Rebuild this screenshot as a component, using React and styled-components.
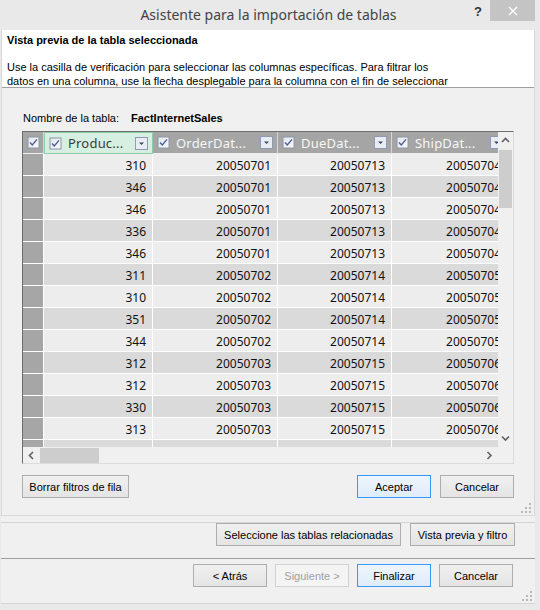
import React from 'react';
import styled, { createGlobalStyle, css } from 'styled-components';

const Global = createGlobalStyle`
  html, body { margin: 0; padding: 0; background: #e9e9e9; }
  body { width: 540px; height: 610px; overflow: hidden; }
  * { box-sizing: border-box; }
`;

const Window = styled.div`
  width: 540px;
  height: 610px;
  background: #e9e9e9;
  display: flex;
  flex-direction: column;
  font-family: "Liberation Sans", Arial, sans-serif;
  font-size: 11px;
  color: #000;
`;

const TitleBar = styled.div`
  height: 30px;
  flex-shrink: 0;
  display: grid;
  grid-template-columns: 1fr auto 1fr;
`;

const Title = styled.div`
  grid-column: 2;
  font-family: "Noto Sans", "Open Sans", sans-serif;
  font-size: 14px;
  color: #444;
  line-height: 30px;
  padding-right: 3px;
`;

const TitleControls = styled.div`
  grid-column: 3;
  display: flex;
  justify-content: flex-end;
  align-items: flex-start;
  padding-right: 5px;
`;

const Help = styled.span`
  font-family: "Liberation Sans", Arial, sans-serif;
  font-weight: bold;
  font-size: 13px;
  color: #333;
  margin-top: 4px;
  margin-right: 8px;
`;

const Close = styled.div`
  width: 45px;
  height: 21px;
  background: #c4c4c4;
  display: flex;
  align-items: center;
  justify-content: center;
`;

const Body = styled.div`
  height: 574px;
  margin: 0 5px 0 1px;
  background: #f0f0f0;
  border-bottom: 1px solid #d5d5d5;
  display: flex;
  flex-direction: column;
  position: relative;
`;

const Inner = styled.div`
  position: relative;
  border: 1px solid #d9d9d9;
  border-top: none;
  display: flex;
  flex-direction: column;
`;

const Banner = styled.div`
  height: 58px;
  background: #fff;
  border-bottom: 1px solid #a0a0a0;
  padding: 4px 0 0 5px;
  overflow: hidden;
`;

const BannerTitle = styled.div`
  font-weight: bold;
  line-height: 13px;
  height: 13px;
`;

const BannerText = styled.div`
  margin-top: 13px;
`;

const Line = styled.div`
  line-height: 14px;
  white-space: nowrap;
`;

const Content = styled.div`
  padding: 23px 20px 17px 20px;
  display: flex;
  flex-direction: column;
`;

const NameRow = styled.div`
  display: flex;
  gap: 12px;
  line-height: 14px;
  padding-left: 1px;
`;

const Bold = styled.span`
  font-weight: bold;
`;

const Grid = styled.div`
  margin-top: 6px;
  height: 333px;
  border: 1px solid;
  border-color: #6e6e6e #dcdcdc #dcdcdc #6e6e6e;
  display: flex;
  flex-direction: column;
  background: #f0f0f0;
`;

const GridMain = styled.div`
  display: flex;
  height: 315px;
`;

const Viewport = styled.div`
  flex: 1;
  overflow: hidden;
`;

const Table = styled.div`
  display: grid;
  grid-template-columns: 21px 109px 125px 114px 116px;
  grid-auto-rows: 22px;
  width: 485px;
  font-family: "Noto Sans", "Open Sans", sans-serif;
`;

const HeadCell = styled.div`
  display: flex;
  align-items: center;
  padding: 0 4px;
  gap: 6px;
  background: #a5a5a5;
  border-right: 1px solid #d6d6d6;
  border-bottom: 1px solid #efefef;
  font-size: 13px;
  color: #f7f7f7;
  overflow: hidden;
  white-space: nowrap;
  ${p => p.$active && css`
    background: #d6efe0;
    border: 1px solid #8ccfa6;
    color: #3a3a3a;
  `}
`;

const HeadLabel = styled.span`
  flex: 1;
  letter-spacing: 0.2px;
`;

const Corner = styled.div`
  background: #a5a5a5;
  border-right: 1px solid #d6d6d6;
  border-bottom: 1px solid #efefef;
  display: flex;
  align-items: center;
  justify-content: center;
`;

const RowHead = styled.div`
  background: #a6a6a6;
  border-right: 1px solid #fff;
  border-bottom: 1px solid #fff;
`;

const Cell = styled.div`
  background: ${p => (p.$alt ? '#dadada' : '#ededed')};
  border-right: 1px solid #fff;
  border-bottom: 1px solid #fff;
  text-align: right;
  padding-right: 6px;
  font-size: 12px;
  line-height: 24px;
  white-space: nowrap;
  overflow: hidden;
  color: #111;
`;

const VScroll = styled.div`
  width: 15px;
  display: flex;
  flex-direction: column;
  background: #f0f0f0;
`;

const ArrowBox = styled.div`
  width: ${p => p.$w || 15}px;
  height: ${p => p.$h || 17}px;
  flex-shrink: 0;
  display: flex;
  align-items: center;
  justify-content: center;
`;

const VThumb = styled.div`
  margin: 1px 1px 0 1px;
  height: 58px;
  background: #cdcdcd;
`;

const Fill = styled.div`
  flex: 1;
`;

const HScroll = styled.div`
  height: 16px;
  display: flex;
  background: #f0f0f0;
`;

const HThumb = styled.div`
  margin-top: 1px;
  width: 59px;
  height: 15px;
  background: #cdcdcd;
`;

const ScrollCorner = styled.div`
  width: 15px;
  background: #f0f0f0;
`;

const ButtonRow = styled.div`
  display: flex;
  gap: ${p => p.$gap || 8}px;
  align-items: center;
  justify-content: ${p => p.$justify || 'flex-end'};
  margin-top: ${p => p.$mt || 0}px;
`;

const Button = styled.button`
  height: 23px;
  width: ${p => p.$w}px;
  padding: 0;
  margin: 0;
  font-family: "Liberation Sans", Arial, sans-serif;
  font-size: 11px;
  color: #000;
  background: linear-gradient(#f0f0f0, #e4e4e4);
  border: 1px solid #adadad;
  border-radius: 0;
  ${p => p.$primary && css`
    border-color: #3399ff;
    background: linear-gradient(#eef5fc, #dfecf9);
  `}
  ${p => p.$disabled && css`
    color: #a0a0a0;
    border-color: #d2d2d2;
    background: #f4f4f4;
  `}
`;

const Spacer = styled.div`
  flex: 1;
`;

const Section = styled.div`
  border-top: 1px solid ${p => p.$dark ? '#a0a0a0' : '#d5d5d5'};
  height: ${p => p.$h}px;
  padding: ${p => p.$pad};
  margin-top: ${p => p.$mt || 0}px;
  display: flex;
  flex-direction: column;
`;

const Grip = styled.svg`
  position: absolute;
  right: 3px;
  bottom: 2px;
`;

const CheckBox = () => (
  <svg width="13" height="13" viewBox="0 0 13 13" style={{ flexShrink: 0 }}>
    <defs>
      <linearGradient id="cbg" x1="0" y1="0" x2="1" y2="1">
        <stop offset="0" stopColor="#e4e7ee" />
        <stop offset="1" stopColor="#f7f8fa" />
      </linearGradient>
    </defs>
    <rect x="0.5" y="0.5" width="12" height="12" fill="#8e96a8" />
    <rect x="1.5" y="1.5" width="10" height="10" fill="url(#cbg)" />
    <path d="M3 6.5 L5.3 9 L10 3.4" fill="none" stroke="#4b5f95" strokeWidth="1.4" />
  </svg>
);

const DropDown = () => (
  <svg width="13" height="13" viewBox="0 0 13 13" style={{ flexShrink: 0 }}>
    <rect x="0.5" y="0.5" width="12" height="12" fill="#e9ecf2" stroke="#8f9bb4" />
    <path d="M4 5.5 H9 L6.5 8 Z" fill="#3d4766" />
  </svg>
);

const Chevron = ({ dir }) => {
  const paths = {
    up: 'M1 5 L4.5 1.5 L8 5',
    down: 'M1 1.5 L4.5 5 L8 1.5',
    left: 'M5 1 L1.5 4.5 L5 8',
    right: 'M1.5 1 L5 4.5 L1.5 8',
  };
  const vertical = dir === 'up' || dir === 'down';
  return (
    <svg width={vertical ? 9 : 7} height={vertical ? 7 : 9} viewBox={vertical ? '0 0 9 7' : '0 0 7 9'}>
      <path d={paths[dir]} fill="none" stroke="#606060" strokeWidth="1.6" />
    </svg>
  );
};

const GripIcon = () => (
  <Grip width="10" height="10" viewBox="0 0 10 10">
    {[[8, 0], [8, 4], [4, 4], [8, 8], [4, 8], [0, 8]].map(([x, y], i) => (
      <rect key={i} x={x} y={y} width="2" height="2" fill="#b8b8b8" />
    ))}
  </Grip>
);

const rows = [
  ['310', '20050701', '20050713', '20050704'],
  ['346', '20050701', '20050713', '20050704'],
  ['346', '20050701', '20050713', '20050704'],
  ['336', '20050701', '20050713', '20050704'],
  ['346', '20050701', '20050713', '20050704'],
  ['311', '20050702', '20050714', '20050705'],
  ['310', '20050702', '20050714', '20050705'],
  ['351', '20050702', '20050714', '20050705'],
  ['344', '20050702', '20050714', '20050705'],
  ['312', '20050703', '20050715', '20050706'],
  ['312', '20050703', '20050715', '20050706'],
  ['330', '20050703', '20050715', '20050706'],
  ['313', '20050703', '20050715', '20050706'],
  ['', '', '', ''],
];

const headers = ['Produc...', 'OrderDat...', 'DueDat...', 'ShipDat...'];

export default function App() {
  return (
    <>
      <Global />
      <Window>
        <TitleBar>
          <Title>Asistente para la importación de tablas</Title>
          <TitleControls>
            <Help>?</Help>
            <Close>
              <svg width="10" height="10" viewBox="0 0 10 10">
                <path d="M1 1 L9 9 M9 1 L1 9" stroke="#fff" strokeWidth="1.3" />
              </svg>
            </Close>
          </TitleControls>
        </TitleBar>
        <Body>
          <Inner>
            <Banner>
              <BannerTitle>Vista previa de la tabla seleccionada</BannerTitle>
              <BannerText>
                <Line>Use la casilla de verificación para seleccionar las columnas específicas. Para filtrar los</Line>
                <Line>datos en una columna, use la flecha desplegable para la columna con el fin de seleccionar</Line>
                <Line>los datos que desea incluir.</Line>
              </BannerText>
            </Banner>
            <Content>
              <NameRow>
                <span>Nombre de la tabla:</span>
                <Bold>FactInternetSales</Bold>
              </NameRow>
              <Grid>
                <GridMain>
                  <Viewport>
                    <Table>
                      <Corner><CheckBox /></Corner>
                      {headers.map((h, i) => (
                        <HeadCell key={h} $active={i === 0}>
                          <CheckBox />
                          <HeadLabel>{h}</HeadLabel>
                          <DropDown />
                        </HeadCell>
                      ))}
                      {rows.map((r, ri) => (
                        <React.Fragment key={ri}>
                          <RowHead />
                          {r.map((v, ci) => (
                            <Cell key={ci} $alt={ri % 2 === 1}>{v}</Cell>
                          ))}
                        </React.Fragment>
                      ))}
                    </Table>
                  </Viewport>
                  <VScroll>
                    <ArrowBox><Chevron dir="up" /></ArrowBox>
                    <VThumb />
                    <Fill />
                    <ArrowBox><Chevron dir="down" /></ArrowBox>
                  </VScroll>
                </GridMain>
                <HScroll>
                  <ArrowBox $w={17} $h={16}><Chevron dir="left" /></ArrowBox>
                  <HThumb />
                  <Fill />
                  <ArrowBox $w={17} $h={16}><Chevron dir="right" /></ArrowBox>
                  <ScrollCorner />
                </HScroll>
              </Grid>
              <ButtonRow $mt={11} $gap={9} $justify="flex-start">
                <Button $w={107}>Borrar filtros de fila</Button>
                <Spacer />
                <Button $w={74} $primary>Aceptar</Button>
                <Button $w={74}>Cancelar</Button>
              </ButtonRow>
            </Content>
            <GripIcon />
          </Inner>
          <Section $h={36} $pad="0 20px 0 0" $mt={6}>
            <ButtonRow $gap={9}>
              <Button $w={185}>Seleccione las tablas relacionadas</Button>
              <Button $w={105}>Vista previa y filtro</Button>
            </ButtonRow>
          </Section>
          <Section $dark $h={45} $pad="5px 22px 0 0">
            <ButtonRow $gap={8}>
              <Button $w={74}>&lt; Atrás</Button>
              <Button $w={74} $disabled>Siguiente &gt;</Button>
              <Button $w={74} $primary>Finalizar</Button>
              <Button $w={74}>Cancelar</Button>
            </ButtonRow>
          </Section>
          <GripIcon />
        </Body>
      </Window>
    </>
  );
}
